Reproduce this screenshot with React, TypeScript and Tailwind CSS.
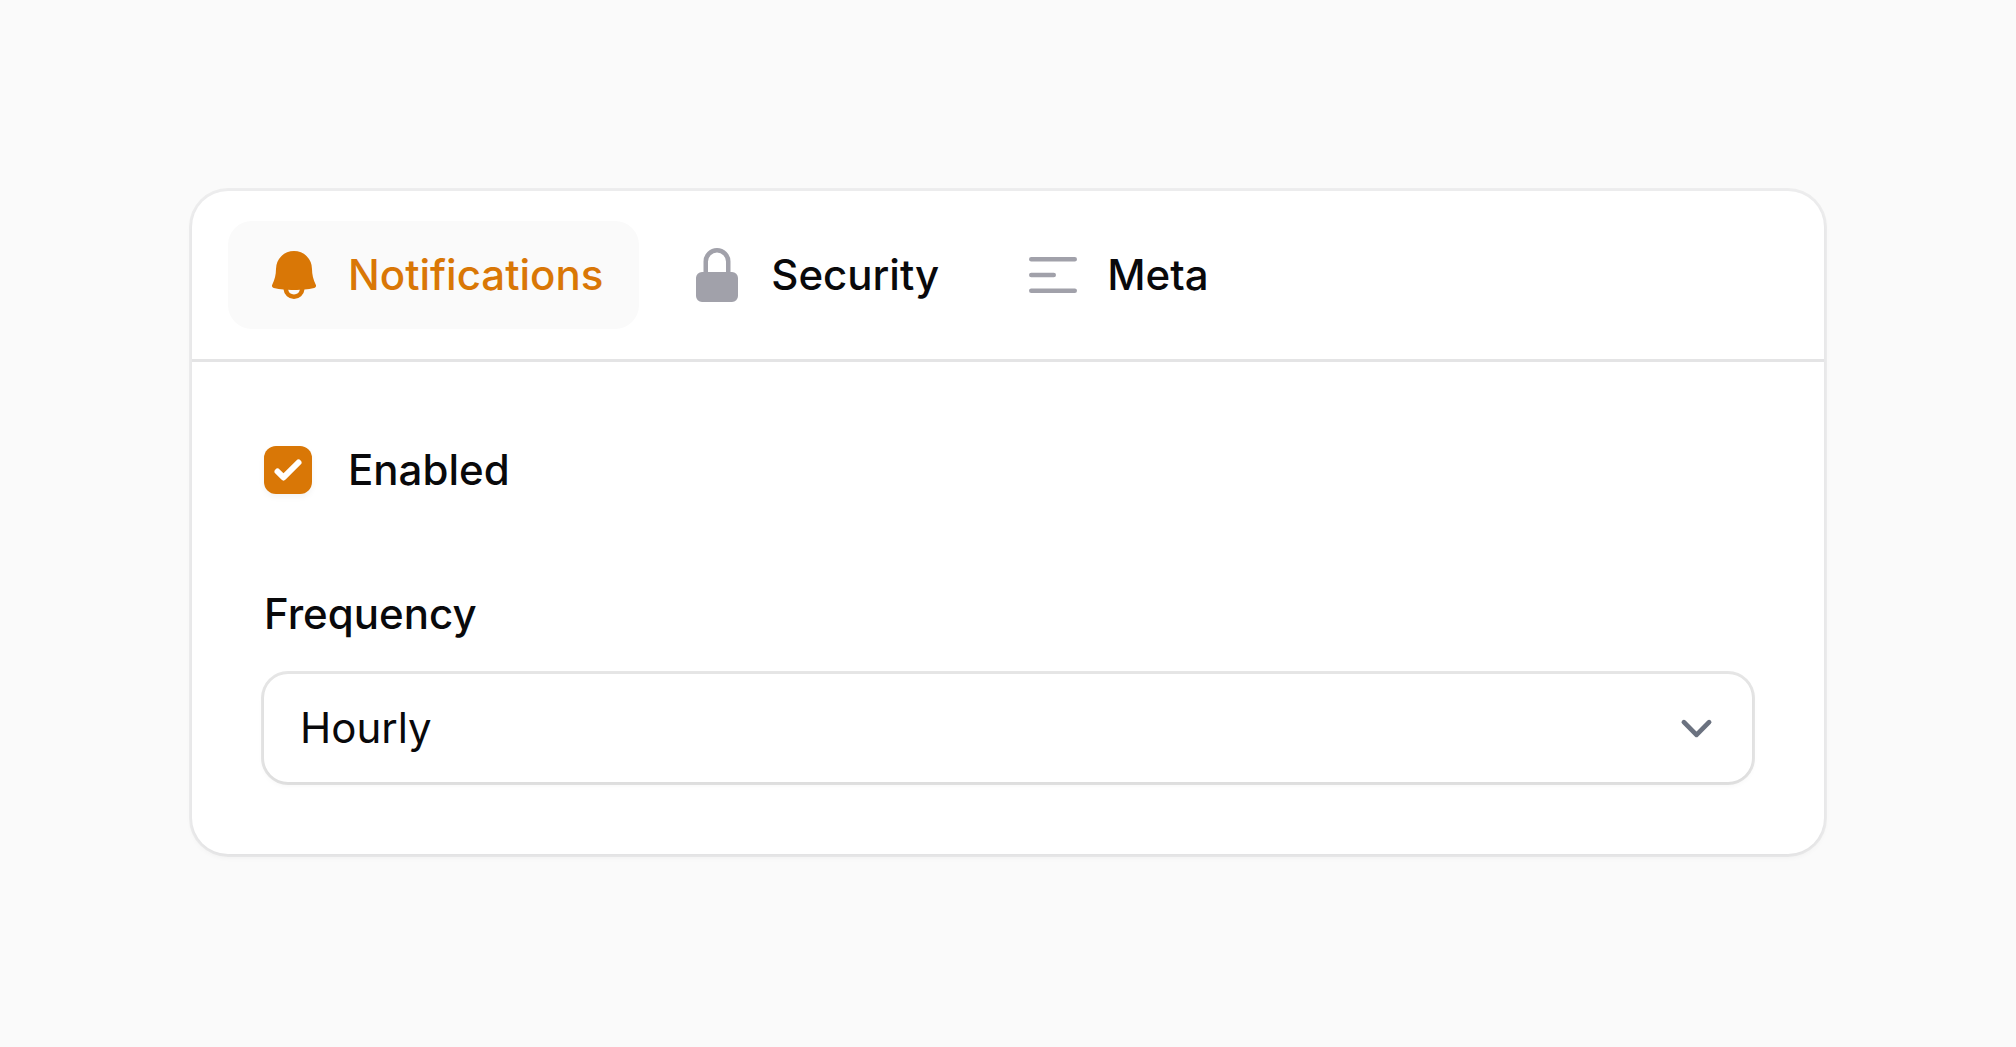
import { useState } from 'react';
import type { IconType } from 'react-icons';
import { HiMiniBars3CenterLeft, HiMiniBell, HiMiniLockClosed } from 'react-icons/hi2';
import clsx from 'clsx';

type TabId = 'notifications' | 'security' | 'meta';

const TABS: { id: TabId; label: string; icon: IconType }[] = [
  { id: 'notifications', label: 'Notifications', icon: HiMiniBell },
  { id: 'security', label: 'Security', icon: HiMiniLockClosed },
  { id: 'meta', label: 'Meta', icon: HiMiniBars3CenterLeft },
];

type TabProps = {
  label: string;
  icon: IconType;
  active: boolean;
  onClick: () => void;
};

function Tab({ label, icon: Icon, active, onClick }: TabProps) {
  return (
    <button
      type="button"
      role="tab"
      aria-selected={active}
      onClick={onClick}
      className={clsx(
        'flex items-center gap-6 rounded-3xl px-9 py-6 font-medium outline-none',
        active ? 'bg-[#fafafa] text-[#d97706]' : 'text-[#09090b] hover:bg-[#fafafa]'
      )}
    >
      <Icon
        aria-hidden="true"
        className={clsx('size-15 shrink-0', active ? 'text-[#d97706]' : 'text-[#a1a1aa]')}
      />
      {label}
    </button>
  );
}

function Checkbox({ id, checked, onChange }: { id: string; checked: boolean; onChange: (v: boolean) => void }) {
  return (
    <span className="relative size-12 shrink-0">
      <input
        id={id}
        type="checkbox"
        checked={checked}
        onChange={(e) => onChange(e.target.checked)}
        className="block size-12 appearance-none rounded-xl bg-white shadow-[0_3px_6px_rgba(0,0,0,0.05)] ring-3 ring-[#09090b]/10 checked:bg-[#d97706] checked:ring-0"
      />
      {checked && (
        <svg viewBox="0 0 16 16" fill="white" aria-hidden="true" className="pointer-events-none absolute inset-0">
          <path d="M12.207 4.793a1 1 0 010 1.414l-5 5a1 1 0 01-1.414 0l-2-2a1 1 0 011.414-1.414L6.5 9.086l4.293-4.293a1 1 0 011.414 0z" />
        </svg>
      )}
    </span>
  );
}

function NotificationsPanel() {
  const [enabled, setEnabled] = useState(true);
  const [frequency, setFrequency] = useState('hourly');

  return (
    <div role="tabpanel" className="flex flex-col gap-18 p-18">
      <div className="flex items-center gap-9">
        <Checkbox id="enabled" checked={enabled} onChange={setEnabled} />
        <label htmlFor="enabled" className="font-medium leading-[72px]">
          Enabled
        </label>
      </div>

      <div className="flex flex-col gap-6">
        <label htmlFor="frequency" className="font-medium leading-[72px]">
          Frequency
        </label>
        <div className="relative rounded-3xl bg-white shadow-[0_3px_6px_rgba(0,0,0,0.05)] ring-3 ring-[#09090b]/10">
          <select
            id="frequency"
            value={frequency}
            onChange={(e) => setFrequency(e.target.value)}
            className="block h-27 w-full appearance-none rounded-3xl bg-transparent pr-24 pl-9 outline-none"
          >
            <option value="hourly">Hourly</option>
            <option value="daily">Daily</option>
            <option value="weekly">Weekly</option>
          </select>
          <svg
            viewBox="0 0 20 20"
            fill="none"
            stroke="#6b7280"
            strokeWidth="1.5"
            strokeLinecap="round"
            strokeLinejoin="round"
            aria-hidden="true"
            className="pointer-events-none absolute inset-y-0 right-6 my-auto size-[63px]"
          >
            <path d="m6 8 4 4 4-4" />
          </svg>
        </div>
      </div>
    </div>
  );
}

export default function App() {
  const [tab, setTab] = useState<TabId>('notifications');

  return (
    <main className="min-h-screen bg-[#fafafa] px-48 pt-[191px] pb-48 font-[Inter,sans-serif] text-[42px] leading-[60px] text-[#09090b]">
      <div className="rounded-[36px] bg-white shadow-[0_3px_6px_rgba(0,0,0,0.05)] ring-3 ring-[#09090b]/5">
        <div role="tablist" className="flex gap-3 border-b-3 border-[#e4e4e5] px-9 py-[30px]">
          {TABS.map((t) => (
            <Tab
              key={t.id}
              label={t.label}
              icon={t.icon}
              active={tab === t.id}
              onClick={() => setTab(t.id)}
            />
          ))}
        </div>

        {tab === 'notifications' && <NotificationsPanel />}
      </div>
    </main>
  );
}
